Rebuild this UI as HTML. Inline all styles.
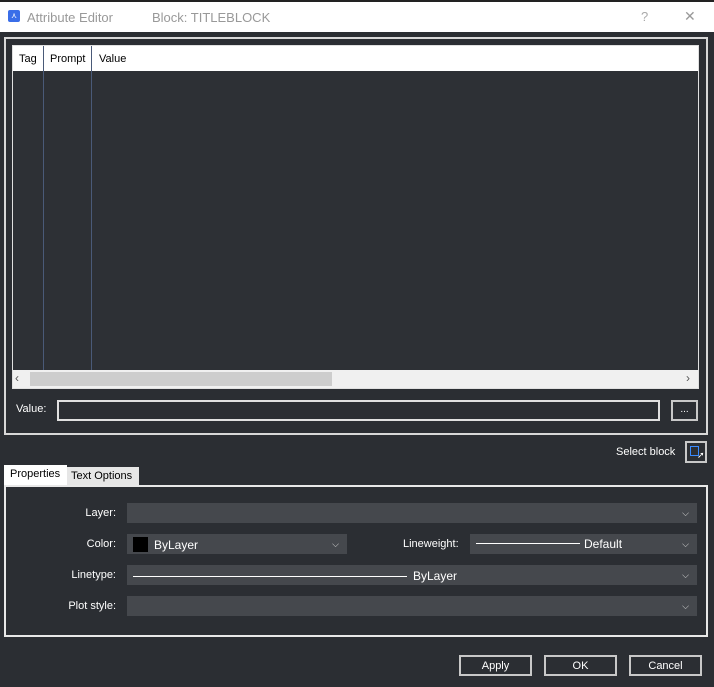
<!DOCTYPE html><html><head><style>
*{box-sizing:border-box;margin:0;padding:0}
body{width:714px;height:687px;background:#2b2e33;font-family:"Liberation Sans",sans-serif;font-size:11px;color:#fff;position:relative;overflow:hidden}
.a{position:absolute}
.combo{position:absolute;background:#45484d;height:20px}
.combo .v{position:absolute;right:8px;top:5px;font-size:9px;color:#ddd}
.lbl{position:absolute;text-align:right;width:100px}
.btn{position:absolute;border:2px solid #c8c8c8;height:21px;width:73px;text-align:center;line-height:18px;font-size:11px}
</style></head><body>
<div class="a" style="left:0;top:0;width:714px;height:2px;background:#222"></div>
<div class="a" style="left:0;top:2px;width:714px;height:30px;background:#fff"></div>
<div class="a" style="left:8px;top:10px;width:12px;height:12px;background:#3a6ee8;border-radius:2px;color:#fff;font-size:8px;text-align:center;line-height:12px">⋏</div>
<div class="a" style="left:27px;top:10px;color:#999;font-size:13px">Attribute Editor</div>
<div class="a" style="left:152px;top:10px;color:#999;font-size:13px">Block: TITLEBLOCK</div>
<div class="a" style="left:641px;top:9px;color:#aaa;font-size:13px">?</div>
<div class="a" style="left:684px;top:8px;color:#999;font-size:14px">✕</div>
<div class="a" style="left:4px;top:37px;width:704px;height:398px;border:2px solid #d8d8d8"></div>
<div class="a" style="left:12px;top:45px;width:687px;height:344px;border:1px solid #e0e0e0;background:#2d3035"></div>
<div class="a" style="left:13px;top:46px;width:685px;height:25px;background:#fff;color:#000"></div>
<div class="a" style="left:19px;top:53px;color:#000">Tag</div>
<div class="a" style="left:50px;top:53px;color:#000">Prompt</div>
<div class="a" style="left:99px;top:53px;color:#000">Value</div>
<div class="a" style="left:43px;top:46px;width:1px;height:324px;background:#4a5a78"></div>
<div class="a" style="left:91px;top:46px;width:1px;height:324px;background:#4a5a78"></div>
<div class="a" style="left:13px;top:370px;width:685px;height:18px;background:#f0f0f0"></div>
<div class="a" style="left:30px;top:372px;width:302px;height:14px;background:#cdcdcd"></div>
<div class="a" style="left:15px;top:371px;color:#555;font-size:12px">‹</div>
<div class="a" style="left:686px;top:371px;color:#555;font-size:12px">›</div>
<div class="a" style="left:16px;top:403px">Value:</div>
<div class="a" style="left:57px;top:400px;width:603px;height:21px;border:2px solid #e0e0e0"></div>
<div class="a" style="left:671px;top:400px;width:27px;height:21px;border:2px solid #c8c8c8;text-align:center;font-size:10px;line-height:16px">...</div>
<div class="a" style="left:616px;top:446px">Select block</div>
<div class="a" style="left:685px;top:441px;width:22px;height:22px;border:2px solid #c8c8c8"><div class="a" style="left:3px;top:3px;width:9px;height:10px;border:1px solid #3a8bff"></div><div class="a" style="left:10px;top:7px;font-size:9px">➚</div></div>
<div class="a" style="left:4px;top:465px;width:63px;height:21px;background:#fff;color:#000;padding:3px 0 0 6px">Properties</div>
<div class="a" style="left:67px;top:467px;width:72px;height:19px;background:#e6e6e6;color:#000;padding:3px 0 0 4px">Text Options</div>
<div class="a" style="left:4px;top:485px;width:704px;height:152px;border:2px solid #e8e8e8"></div>
<div class="lbl" style="left:16px;top:507px">Layer:</div>
<div class="combo" style="left:127px;top:503px;width:570px"><span class="v">⌵</span></div>
<div class="lbl" style="left:16px;top:538px">Color:</div>
<div class="combo" style="left:127px;top:534px;width:220px"><div class="a" style="left:6px;top:3px;width:15px;height:15px;background:#000"></div><div class="a" style="left:27px;top:4px;font-size:12px">ByLayer</div><span class="v">⌵</span></div>
<div class="a" style="left:403px;top:538px">Lineweight:</div>
<div class="combo" style="left:470px;top:534px;width:227px"><div class="a" style="left:6px;top:9px;width:104px;height:1px;background:#fff"></div><div class="a" style="left:114px;top:3px;font-size:12px">Default</div><span class="v">⌵</span></div>
<div class="lbl" style="left:16px;top:569px">Linetype:</div>
<div class="combo" style="left:127px;top:565px;width:570px"><div class="a" style="left:6px;top:11px;width:274px;height:1px;background:#fff"></div><div class="a" style="left:286px;top:4px;font-size:12px">ByLayer</div><span class="v">⌵</span></div>
<div class="lbl" style="left:16px;top:600px">Plot style:</div>
<div class="combo" style="left:127px;top:596px;width:570px"><span class="v">⌵</span></div>
<div class="btn" style="left:459px;top:655px">Apply</div>
<div class="btn" style="left:544px;top:655px">OK</div>
<div class="btn" style="left:629px;top:655px">Cancel</div>
</body></html>
